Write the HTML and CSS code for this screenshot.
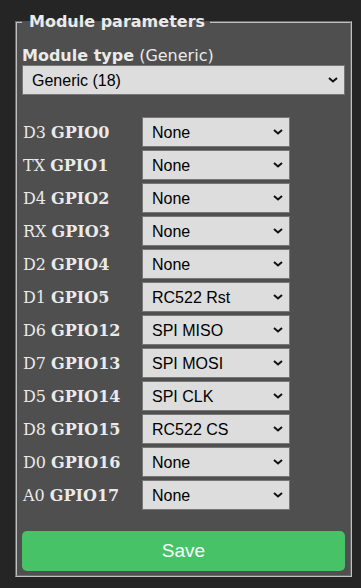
FILE: index.html
```html
<!DOCTYPE html>
<html lang="en">
<head>
    <meta charset="UTF-8">
    <meta name="viewport" content="width=device-width, initial-scale=1.0">
    <title>Configure Module</title>
    <link rel="stylesheet" href="styles.css">
</head>
<body>
    <div class="wrap">
        <fieldset>
            <legend>Module parameters</legend>
            <form id="moduleForm">
                <p class="modlabel"><b>Module type</b> (Generic)</p>
                <select id="module" class="wide">
                    <option>Generic (18)</option>
                </select>
                <div class="gpio" id="gpio"></div>
                <button type="submit">Save</button>
            </form>
        </fieldset>
    </div>
    <script>
        const pins = [
            ['D3', 'GPIO0', 'None'],
            ['TX', 'GPIO1', 'None'],
            ['D4', 'GPIO2', 'None'],
            ['RX', 'GPIO3', 'None'],
            ['D2', 'GPIO4', 'None'],
            ['D1', 'GPIO5', 'RC522 Rst'],
            ['D6', 'GPIO12', 'SPI MISO'],
            ['D7', 'GPIO13', 'SPI MOSI'],
            ['D5', 'GPIO14', 'SPI CLK'],
            ['D8', 'GPIO15', 'RC522 CS'],
            ['D0', 'GPIO16', 'None'],
            ['A0', 'GPIO17', 'None']
        ];
        const options = ['None', 'RC522 Rst', 'SPI MISO', 'SPI MOSI', 'SPI CLK', 'RC522 CS'];
        const grid = document.getElementById('gpio');

        pins.forEach(function (p) {
            const label = document.createElement('label');
            label.className = 'pin';
            label.innerHTML = p[0] + ' <b>' + p[1] + '</b>';

            const sel = document.createElement('select');
            options.forEach(function (o) {
                const opt = document.createElement('option');
                opt.textContent = o;
                if (o === p[2]) opt.selected = true;
                sel.appendChild(opt);
            });

            grid.appendChild(label);
            grid.appendChild(sel);
        });

        document.getElementById('moduleForm').addEventListener('submit', function (e) {
            e.preventDefault();
        });
    </script>
</body>
</html>
```

FILE: styles.css
```css
body {
    font-family: "DejaVu Sans", Verdana, sans-serif;
    font-size: 16px;
    background-color: #252525;
    color: #eaeaea;
    margin: 0;
    padding: 0;
}
.wrap {
    padding: 12px 9px 0 15px;
}
fieldset {
    background: #4f4f4f;
    border: 2px groove #c0c0c0;
    margin: 0;
    padding: 0 5px 4px 5px;
}
legend {
    font-weight: bold;
    line-height: 20px;
    padding: 0 5px 0 7px;
}
.modlabel {
    margin: 14px 0 0;
    line-height: 19px;
}
select {
    -webkit-appearance: none;
    appearance: none;
    font-family: "Liberation Sans", Arial, sans-serif;
    font-size: 16px;
    color: #000;
    background-color: #dddddd;
    background-image: url("data:image/svg+xml,%3Csvg xmlns='http://www.w3.org/2000/svg' width='10' height='6' viewBox='0 0 10 6'%3E%3Cpath d='M1 1l4 3.5L9 1' fill='none' stroke='%23111' stroke-width='2'/%3E%3C/svg%3E");
    background-repeat: no-repeat;
    background-position: right 6px center;
    border: 1px solid #767676;
    border-radius: 0;
    height: 30px;
    padding: 0 20px 0 9px;
    margin: 0;
}
.wide {
    display: block;
    width: 100%;
}
.gpio {
    display: grid;
    grid-template-columns: 120px 148px;
    row-gap: 3px;
    align-items: center;
    margin-top: 22px;
}
.pin {
    font-family: "DejaVu Serif", "Times New Roman", serif;
    font-size: 16px;
    padding-left: 1px;
}
button {
    display: block;
    width: 100%;
    height: 40px;
    margin-top: 21px;
    border: 0;
    border-radius: 5px;
    background-color: #47c266;
    color: #faffff;
    font-family: "Liberation Sans", Arial, sans-serif;
    font-size: 19px;
    cursor: pointer;
}
```
